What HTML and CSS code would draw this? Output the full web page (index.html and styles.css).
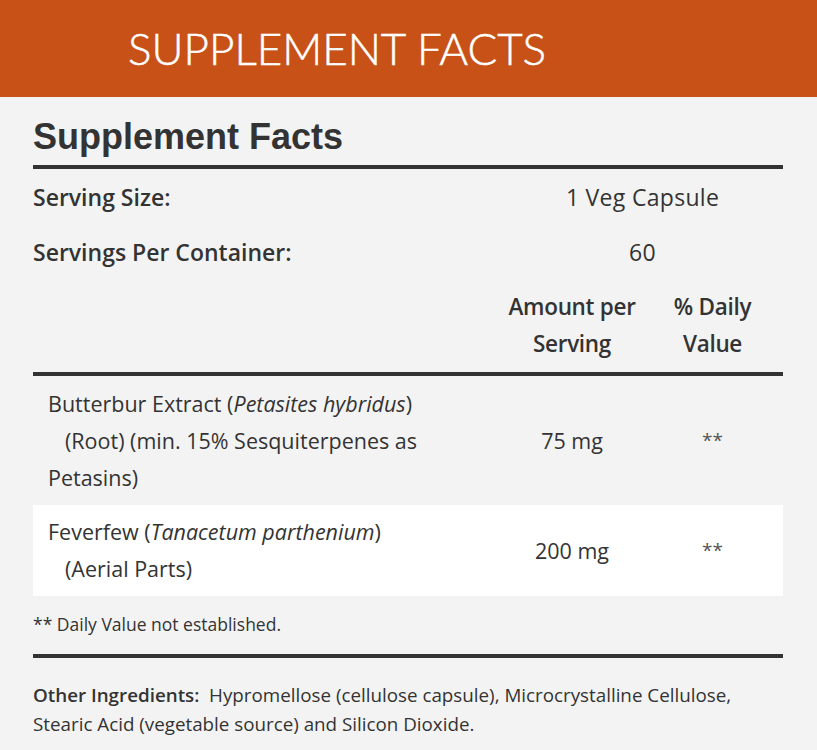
FILE: index.html
```html
<!DOCTYPE html>
<html>
<head>
<meta charset="utf-8">
<link rel="stylesheet" href="styles.css">
</head>
<body>
<header class="band">
  <h1 class="band-title">SUPPLEMENT FACTS</h1>
</header>
<main class="facts">
  <h2 class="facts-title">Supplement Facts</h2>
  <table class="facts-table">
    <colgroup>
      <col class="c1"><col class="c2"><col class="c3">
    </colgroup>
    <tbody>
      <tr class="serve">
        <th class="label">Serving Size:</th>
        <td class="val" colspan="2">1 Veg Capsule</td>
      </tr>
      <tr class="serve">
        <th class="label">Servings Per Container:</th>
        <td class="val" colspan="2">60</td>
      </tr>
      <tr class="head">
        <th></th>
        <th class="hcell">Amount per<br>Serving</th>
        <th class="hcell">% Daily<br>Value</th>
      </tr>
      <tr class="ing">
        <td class="name">Butterbur Extract (<em>Petasites hybridus</em>)<br><span class="ind"></span>(Root) (min. 15% Sesquiterpenes as<br>Petasins)</td>
        <td class="amt">75 mg</td>
        <td class="dv">**</td>
      </tr>
      <tr class="ing alt">
        <td class="name">Feverfew (<em>Tanacetum parthenium</em>)<br><span class="ind"></span>(Aerial Parts)</td>
        <td class="amt">200 mg</td>
        <td class="dv">**</td>
      </tr>
    </tbody>
  </table>
  <p class="note">** Daily Value not established.</p>
  <p class="other"><strong>Other Ingredients:</strong>&nbsp; Hypromellose (cellulose capsule), Microcrystalline Cellulose,<br>Stearic Acid (vegetable source) and Silicon Dioxide.</p>
</main>
</body>
</html>
```
FILE: styles.css
```css
html, body {
  margin: 0;
  padding: 0;
}
body {
  background: #f3f3f3;
  color: #333;
  font-family: "Open Sans", Lato, sans-serif;
  width: 817px;
  height: 750px;
  overflow: hidden;
}
.band {
  background: #c75116;
  height: 97px;
  display: flex;
  align-items: center;
}
.band-title {
  margin: 0 0 0 128px;
  font-family: Lato, sans-serif;
  font-weight: 300;
  font-size: 44px;
  color: #fff;
  line-height: 1;
  padding-bottom: 2px;
  -webkit-text-stroke: 0.5px #fff;
}
.facts {
  padding: 0 34px 0 33px;
}
.facts-title {
  margin: 0;
  padding-top: 19px;
  font-family: "Liberation Sans", Arial, sans-serif;
  font-weight: 700;
  font-size: 36px;
  line-height: 42px;
  color: #333;
  padding-bottom: 7px;
  border-bottom: 4px solid #333;
}
.facts-table {
  width: 750px;
  border-collapse: collapse;
  table-layout: fixed;
}
.c1 { width: 469px; }
.c2 { width: 140px; }
.c3 { width: 141px; }
.serve th, .serve td {
  height: 55px;
  padding: 0;
  vertical-align: middle;
}
.label {
  text-align: left;
  font-weight: 600;
  font-size: 23px;
  letter-spacing: 0;
}
.val {
  text-align: center;
  font-weight: 400;
  font-size: 23px;
  letter-spacing: 0.3px;
}
.head th {
  border-bottom: 4px solid #333;
  padding: 9px 0 10px;
  font-size: 22.5px;
  line-height: 37px;
  font-weight: 600;
  text-align: center;
  letter-spacing: -0.3px;
}
.ing td {
  font-size: 21.5px;
  line-height: 37px;
  padding: 9px 0 9px;
  vertical-align: middle;
}
.ing.alt td {
  background: #fff;
  padding: 8px 0 9px;
}
.name {
  padding-left: 15px !important;
}
.ind {
  display: inline-block;
  width: 17px;
}
.amt, .dv {
  text-align: center;
}
.dv {
  color: #555;
  font-size: 19px !important;
}
.note {
  margin: 0;
  padding: 14px 0 16px;
  font-size: 17.5px;
  line-height: 28px;
  border-bottom: 4px solid #333;
}
.other {
  margin: 0;
  padding-top: 23px;
  font-size: 18.8px;
  line-height: 29px;
  white-space: nowrap;
}
.other strong {
  font-weight: 600;
}
```
